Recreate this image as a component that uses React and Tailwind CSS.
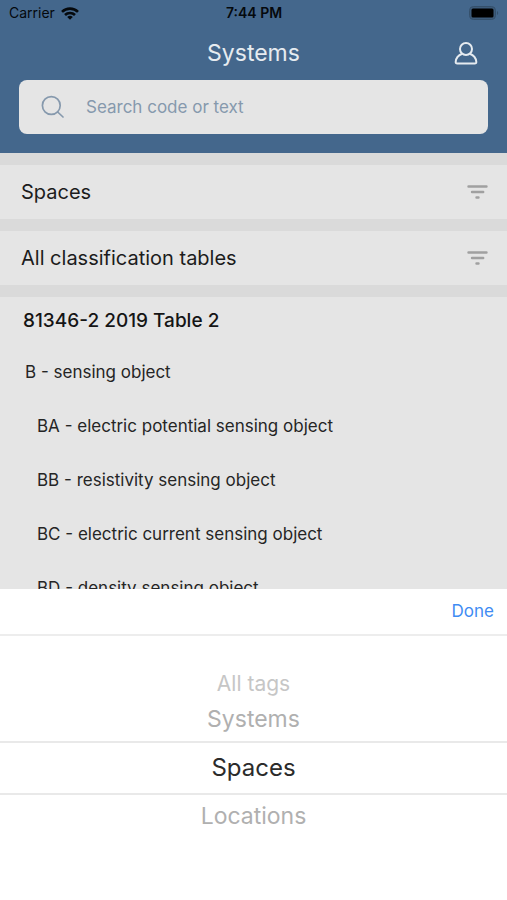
import React, { useState } from "react";

const filters = ["Spaces", "All classification tables"];

const entries = [
  "BA - electric potential sensing object",
  "BB - resistivity sensing object",
  "BC - electric current sensing object",
  "BD - density sensing object",
];

const options = [
  { label: "All tags", style: "h-7 text-[21px] text-[#c6c6c6]" },
  { label: "Systems", style: "h-[43px] text-[23px] text-[#b0b0b0]" },
  { label: "Spaces", style: "h-[54px] border-y-2 border-[#e9e9e9] text-[24px] text-[#2b2b2b]" },
  { label: "Locations", style: "h-[42px] text-[23px] text-[#b0b0b0]" },
];

function WifiIcon() {
  return (
    <svg viewBox="0 0 18 13" className="h-[13px] w-[18px]" fill="none" stroke="#05090d" strokeWidth="2.6" aria-hidden="true">
      <path d="M1 4.9a11.4 11.4 0 0 1 16 0" />
      <path d="M4 8a7.1 7.1 0 0 1 10 0" />
      <path d="M9 12.8 6.2 10a4 4 0 0 1 5.6 0z" fill="#05090d" stroke="none" />
    </svg>
  );
}

function BatteryIcon() {
  return (
    <svg viewBox="0 0 30 14" className="h-[14px] w-[30px]" aria-hidden="true">
      <rect x="0.5" y="0.5" width="26" height="13" rx="4" fill="#3d5b7a" stroke="#35506b" />
      <rect x="2.5" y="2.5" width="22" height="9" rx="1.500" fill="#000" />
      <path d="M28 5v4c1.600-.6 1.600-3.400 0-4z" fill="#35506b" />
    </svg>
  );
}

function UserIcon() {
  return (
    <svg viewBox="0 0 24 24" className="h-6 w-6" fill="none" stroke="#e6ebf0" strokeWidth="2" strokeLinejoin="round" aria-hidden="true">
      <circle cx="12" cy="8" r="6" />
      <path d="M8.200 12.700C4.200 14.200 2 17 1.700 20.800c-.1 1.200.4 1.700 1.600 1.700h17.400c1.200 0 1.700-.5 1.600-1.700-.3-3.800-2.500-6.600-6.500-8.100" />
    </svg>
  );
}

function SearchIcon() {
  return (
    <svg viewBox="0 0 24 24" className="h-6 w-6 shrink-0" fill="none" stroke="#8699ad" strokeWidth="1.700" strokeLinecap="round" aria-hidden="true">
      <circle cx="10.300" cy="10.500" r="8.900" />
      <path d="m16.700 17 5.300 5" />
    </svg>
  );
}

function FilterIcon() {
  return (
    <svg viewBox="0 0 22 16" className="h-4 w-[22px] shrink-0" fill="none" stroke="#a0a0a0" strokeWidth="2.400" strokeLinecap="round" aria-hidden="true">
      <path d="M2.500 2.500h18M6 8h11.200M10.500 13.500h2" />
    </svg>
  );
}

export default function App() {
  const [selected, setSelected] = useState("Spaces");

  return (
    <div className="flex h-screen flex-col overflow-hidden bg-white font-['Inter','Liberation_Sans',sans-serif]">
      <div className="flex min-h-0 flex-1 flex-col overflow-hidden bg-[#dadada]">
        <header className="shrink-0 bg-[#44678c] pb-[19px]">
          <div className="grid h-[26px] grid-cols-3 items-center pr-2 pl-[9px] text-sm text-[#05090d]">
            <div className="flex items-center gap-[6px]">
              <span>Carrier</span>
              <WifiIcon />
            </div>
            <span className="text-center font-semibold">7:44 PM</span>
            <div className="flex justify-end">
              <BatteryIcon />
            </div>
          </div>
          <div className="grid h-[54px] grid-cols-[1fr_auto_1fr] items-center px-[29px]">
            <h1 className="col-start-2 text-[23px] text-[#e6ebf0]">Systems</h1>
            <button type="button" aria-label="Account" className="justify-self-end">
              <UserIcon />
            </button>
          </div>
          <label className="mx-[19px] flex h-[54px] items-center gap-[21px] rounded-lg bg-[#e5e5e5] px-[22px]">
            <SearchIcon />
            <input
              type="search"
              aria-label="Search code or text"
              placeholder="Search code or text"
              className="h-7 min-w-0 flex-1 bg-transparent text-[17px] text-[#1c1c1c] outline-none placeholder:text-[#8699ad]"
            />
          </label>
        </header>

        <div className="flex shrink-0 flex-col gap-3 py-3">
          {filters.map((name) => (
            <button
              key={name}
              type="button"
              className="flex h-[54px] items-center justify-between bg-[#e5e5e5] pr-[19px] pl-[21px] text-left text-[20px] text-[#1c1c1c]"
            >
              {name}
              <FilterIcon />
            </button>
          ))}
        </div>

        <main className="min-h-0 flex-1 overflow-hidden bg-[#e5e5e5] text-[17px] text-[#252525]">
          <h2 className="flex h-[49px] items-center pl-[23px] text-[19px] font-medium text-[#151515]">81346-2 2019 Table 2</h2>
          <p className="flex h-[54px] items-center pl-[25px]">B - sensing object</p>
          <ul className="pl-[37px]">
            {entries.map((entry) => (
              <li key={entry} className="flex h-[54px] items-center whitespace-nowrap">
                {entry}
              </li>
            ))}
          </ul>
        </main>
      </div>

      <section className="shrink-0 bg-white pb-[63px]" aria-label="Choose a tag">
        <div className="flex h-[47px] items-center justify-end border-b-2 border-[#ededed] pr-[13px]">
          <button type="button" className="text-[17px] text-[#3f8cf3]">Done</button>
        </div>
        <div role="listbox" aria-label="Tags" className="flex flex-col pt-[34px]">
          {options.map(({ label, style }) => (
            <button
              key={label}
              type="button"
              role="option"
              aria-selected={selected === label}
              onClick={() => setSelected(label)}
              className={`flex items-center justify-center ${style}`}
            >
              {label}
            </button>
          ))}
        </div>
      </section>
    </div>
  );
}
